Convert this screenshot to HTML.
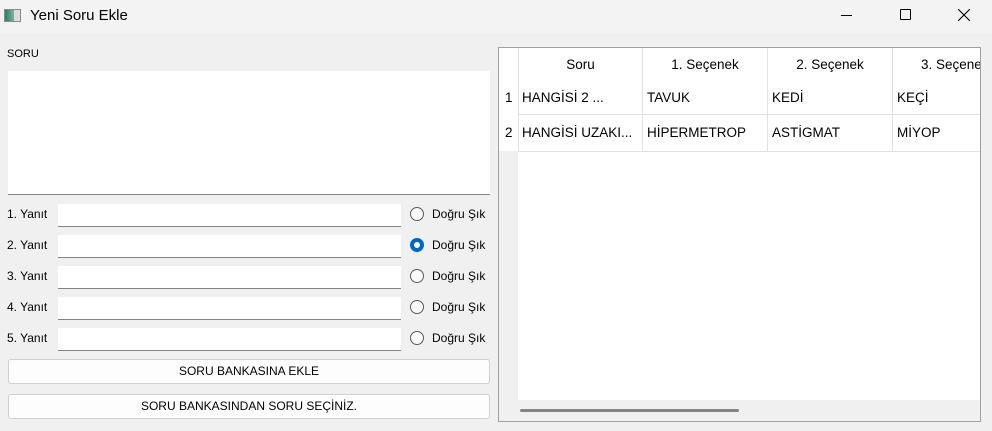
<!DOCTYPE html>
<html><head><meta charset="utf-8"><style>
*{box-sizing:border-box;margin:0;padding:0}
body{width:992px;height:431px;background:#f0f0f0;font-family:"Segoe UI","Liberation Sans","DejaVu Sans",sans-serif;font-size:12px;color:#000;position:relative;overflow:hidden}
.a{position:absolute}
.tb{left:0;top:0;width:992px;height:33px;background:#f3f3f3}
.in{background:#fff;border-bottom:1px solid #838383}
.lbl{font-size:12px}
.rad{width:14px;height:14px;border-radius:50%;border:1px solid #5a5a5a;background:#fafafa}
.btn{left:8px;width:482px;height:25px;background:#fdfdfd;border:1px solid #d0d0d0;border-radius:3px;text-align:center;line-height:23px;font-size:12px}
.cell{position:absolute;font-size:13.5px;line-height:34px;padding-left:4px;white-space:nowrap;overflow:hidden}
.hd{text-align:center;padding:0}
</style></head><body>
<div class="a tb"></div>
<div class="a" style="left:4px;top:9px;width:17px;height:13px;border:1px solid #888;background:linear-gradient(90deg,#2f7d5c,#7fb0a0 60%,#ddd 60%)"></div>
<div class="a" style="left:30px;top:7px;font-size:15px">Yeni Soru Ekle</div>
<div class="a" style="left:841px;top:15px;width:11px;height:1px;background:#000"></div>
<div class="a" style="left:900px;top:9px;width:11px;height:11px;border:1px solid #000;border-radius:1px"></div>
<svg class="a" style="left:958px;top:9px" width="12" height="12"><path d="M0 0L12 12M12 0L0 12" stroke="#000" stroke-width="1.1"/></svg>

<div class="a lbl" style="left:7px;top:48px;font-size:11px">SORU</div>
<div class="a in" style="left:8px;top:71px;width:482px;height:124px"></div>

<div class="a lbl" style="left:7px;top:207px">1. Yanıt</div>
<div class="a in" style="left:58px;top:204px;width:343px;height:23px"></div>
<div class="a rad" style="left:410px;top:207px"></div>
<div class="a lbl" style="left:432px;top:207px">Doğru Şık</div>

<div class="a lbl" style="left:7px;top:238px">2. Yanıt</div>
<div class="a in" style="left:58px;top:235px;width:343px;height:23px"></div>
<div class="a rad" style="left:410px;top:238px;border:4px solid #0067c0;background:#fff"></div>
<div class="a lbl" style="left:432px;top:238px">Doğru Şık</div>

<div class="a lbl" style="left:7px;top:269px">3. Yanıt</div>
<div class="a in" style="left:58px;top:266px;width:343px;height:23px"></div>
<div class="a rad" style="left:410px;top:269px"></div>
<div class="a lbl" style="left:432px;top:269px">Doğru Şık</div>

<div class="a lbl" style="left:7px;top:300px">4. Yanıt</div>
<div class="a in" style="left:58px;top:297px;width:343px;height:23px"></div>
<div class="a rad" style="left:410px;top:300px"></div>
<div class="a lbl" style="left:432px;top:300px">Doğru Şık</div>

<div class="a lbl" style="left:7px;top:331px">5. Yanıt</div>
<div class="a in" style="left:58px;top:328px;width:343px;height:23px"></div>
<div class="a rad" style="left:410px;top:331px"></div>
<div class="a lbl" style="left:432px;top:331px">Doğru Şık</div>

<div class="a btn" style="top:359px">SORU BANKASINA EKLE</div>
<div class="a btn" style="top:394px">SORU BANKASINDAN SORU SEÇİNİZ.</div>

<div class="a" style="left:498px;top:47px;width:483px;height:375px;border:1px solid #a0a0a0;background:#fff;overflow:hidden">
 <div class="a" style="left:0;top:103px;width:19px;height:300px;background:#f0f0f0"></div>
 <div class="a" style="left:0;top:352px;width:483px;height:30px;background:#f0f0f0"></div>
 <div class="a" style="left:21px;top:361px;width:219px;height:3px;background:#858585;border-radius:2px"></div>
 <div class="a" style="left:19px;top:0;width:1px;height:104px;background:#e0e0e0"></div>
 <div class="a" style="left:143px;top:0;width:1px;height:104px;background:#e0e0e0"></div>
 <div class="a" style="left:268px;top:0;width:1px;height:104px;background:#e0e0e0"></div>
 <div class="a" style="left:393px;top:0;width:1px;height:104px;background:#e0e0e0"></div>
 <div class="a" style="left:19px;top:66px;width:470px;height:1px;background:#e0e0e0"></div>
 <div class="a" style="left:19px;top:103px;width:470px;height:1px;background:#e0e0e0"></div>
 <div class="cell hd" style="left:20px;top:0;width:123px">Soru</div>
 <div class="cell hd" style="left:144px;top:0;width:124px">1. Seçenek</div>
 <div class="cell hd" style="left:269px;top:0;width:124px">2. Seçenek</div>
 <div class="cell" style="left:422px;top:0;width:80px;padding:0">3. Seçenek</div>
 <div class="cell" style="left:2px;top:33px">1</div>
 <div class="cell" style="left:19px;top:33px">HANGİSİ 2 ...</div>
 <div class="cell" style="left:144px;top:33px">TAVUK</div>
 <div class="cell" style="left:269px;top:33px">KEDİ</div>
 <div class="cell" style="left:394px;top:33px">KEÇİ</div>
 <div class="cell" style="left:2px;top:68px">2</div>
 <div class="cell" style="left:19px;top:68px">HANGİSİ UZAKI...</div>
 <div class="cell" style="left:144px;top:68px">HİPERMETROP</div>
 <div class="cell" style="left:269px;top:68px">ASTİGMAT</div>
 <div class="cell" style="left:394px;top:68px">MİYOP</div>
</div>
</body></html>
